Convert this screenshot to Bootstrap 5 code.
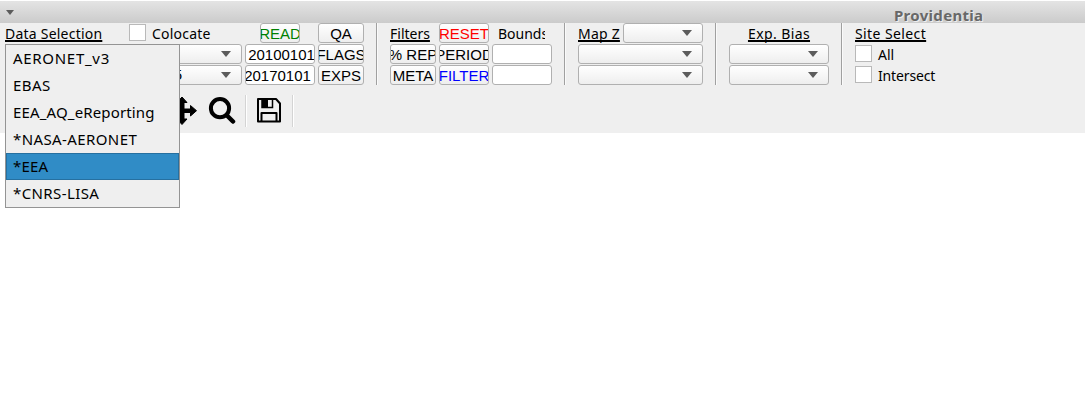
<!DOCTYPE html>
<html lang="en">
<head>
<meta charset="utf-8">
<title>Providentia</title>
<link href="https://cdn.jsdelivr.net/npm/bootstrap@5.3.0/dist/css/bootstrap.min.css" rel="stylesheet">
<style>
body{font:15px/20px "Noto Sans","Open Sans",sans-serif;color:#000;background:#fff;overflow:hidden}
.titlebar{height:23px;border-top:1px solid #fff;background:linear-gradient(#e4e4e4,#cbcbcb);padding-left:6px}
.titlebar .tri{width:8px;height:5px;margin-top:9px}
.app-title{font:bold 15px/20px "Noto Sans",sans-serif;color:#686868;margin-left:880px;padding-top:4px;text-shadow:1px 1px 0 #eee;letter-spacing:.3px}
.panel{height:110px;background:#efefef}
.controls{height:62px}
.group{display:grid;grid-template-rows:repeat(3,20px);row-gap:1px;column-gap:3px;white-space:nowrap;margin-left:12px}
.g-data{grid-template-columns:237px 70px 46px;margin-left:5px;width:359px}
.g-filter{grid-template-columns:46px 50px 60px;width:162px}
.g-map{grid-template-columns:125px}
.g-bias{grid-template-columns:100px}
.rule{width:2px;height:62px;border-left:1px solid #a0a0a0;border-right:1px solid #fafafa;margin-left:12px}
.ctl{height:20px;border:1px solid #b0b0b0;border-radius:3px;background:linear-gradient(#fff,#eee);font:15px/20px "Liberation Sans",sans-serif;display:flex;justify-content:center;overflow:hidden;white-space:nowrap;color:#000}
.field{background:#fff}
.combo{justify-content:flex-end;align-items:center;padding-right:10px}
.tri{width:10px;height:6px;background:#5c5c5c;clip-path:polygon(0 0,100% 0,50% 100%)}
.head{text-decoration:underline;text-decoration-thickness:2px;text-underline-offset:1px;text-decoration-skip-ink:none}
.box{width:17px;height:17px;margin-top:1px;background:#fff;border:1px solid #b9b9b9;flex:none}
.lbl{display:block;line-height:21px;font-size:14px}
.s2{letter-spacing:.22px}.s4{letter-spacing:.4px}.sn{letter-spacing:-.15px}
.menu{left:5px;top:44px;width:175px;height:164px;border:1px solid #949494;background:#efefef}
.menu div{height:27px;line-height:27px;padding-left:7px;font-size:15px;white-space:nowrap}
.menu .on{background:#308cc6;box-shadow:inset 0 0 0 1px #2670a0}
.tools{height:48px;padding:10px 0 0 167px}
.tools svg{display:block;flex:none}
.tsep{width:2px;height:32px;border-left:1px solid #d4d4d4;border-right:1px solid #fff}
</style>
</head>
<body>
<header class="titlebar d-flex"><div class="tri flex-shrink-0"></div><div class="app-title">Providentia</div></header>
<main class="panel">
 <div class="controls d-flex">
  <section class="group g-data">
   <div class="d-flex"><span class="lbl s2" style="width:124px"><span class="head">Data Selection</span></span><span class="box"></span><span class="lbl s2" style="margin-left:6px">Colocate</span></div>
   <div class="d-flex justify-content-center"><div class="ctl" style="width:40px;color:#008000">READ</div></div>
   <div class="ctl">QA</div>
   <div class="ctl combo"><i class="tri"></i></div>
   <div class="ctl field"><span style="margin-left:3px">20100101</span></div>
   <div class="ctl">FLAGS</div>
   <div class="ctl combo"><span style="margin-right:39px">5</span><i class="tri"></i></div>
   <div class="ctl field"><span style="margin-right:5px">20170101</span></div>
   <div class="ctl">EXPS</div>
  </section>
  <div class="rule"></div>
  <section class="group g-filter">
   <span class="lbl head">Filters</span><div class="ctl" style="color:#f00">RESET</div><span class="lbl overflow-hidden" style="width:53px;padding-left:6px">Bounds</span>
   <div class="ctl">% REP</div><div class="ctl">PERIOD</div><div class="ctl field"></div>
   <div class="ctl">META</div><div class="ctl" style="color:#00f">FILTER</div><div class="ctl field"></div>
  </section>
  <div class="rule"></div>
  <section class="group g-map">
   <div class="d-flex justify-content-between"><span class="lbl head s2">Map Z</span><div class="ctl combo" style="width:80px"><i class="tri"></i></div></div>
   <div class="ctl combo"><i class="tri"></i></div><div class="ctl combo"><i class="tri"></i></div>
  </section>
  <div class="rule"></div>
  <section class="group g-bias">
   <div class="d-flex justify-content-center"><span class="lbl head s4">Exp. Bias</span></div>
   <div class="ctl combo"><i class="tri"></i></div><div class="ctl combo"><i class="tri"></i></div>
  </section>
  <div class="rule"></div>
  <section class="group">
   <span class="lbl head s4">Site Select</span>
   <div class="d-flex"><span class="box"></span><span class="lbl" style="margin-left:6px">All</span></div>
   <div class="d-flex"><span class="box"></span><span class="lbl sn" style="margin-left:6px">Intersect</span></div>
  </section>
 </div>
 <div class="tools d-flex">
  <svg width="30" height="32" viewBox="0 0 30 32"><path d="M15 2l5 5.500h-3v6.500h6.500v-3.500l6 5.200-6 5.300v-3.500H17V24h3l-5 5.500L10 24h3v-6.500H6.500V21l-6-5.300 6-5.200V14H13V7.500h-3z" stroke="#000" stroke-linejoin="round"/></svg>
  <svg width="30" height="32" viewBox="0 0 30 32" style="margin-left:9px"><circle cx="14" cy="13.200" r="9.100" fill="none" stroke="#000" stroke-width="4"/><path d="M21 20.500l6 6" stroke="#000" stroke-width="4.500" stroke-linecap="round"/></svg>
  <i class="tsep" style="margin-left:9px"></i>
  <svg width="30" height="32" viewBox="0 0 30 32" style="margin-left:7px"><path d="M4 4h18l4 4.500V26.500H4z M7.500 26v-8h15v8" fill="none" stroke="#000" stroke-width="2" stroke-linejoin="round"/><path d="M8 4h6v8H8z"/><path d="M8 4v8.500h10.500V4" fill="none" stroke="#000" stroke-width="1.500"/></svg>
  <i class="tsep" style="margin-left:8px"></i>
 </div>
</main>
<div class="menu position-absolute"><div style="letter-spacing:.7px">AERONET_v3</div><div class="s4">EBAS</div><div style="letter-spacing:.15px">EEA_AQ_eReporting</div><div class="s4">*NASA-AERONET</div><div class="on s2">*EEA</div><div class="s4">*CNRS-LISA</div></div>
<script src="https://cdn.jsdelivr.net/npm/bootstrap@5.3.0/dist/js/bootstrap.bundle.min.js"></script>
</body>
</html>
